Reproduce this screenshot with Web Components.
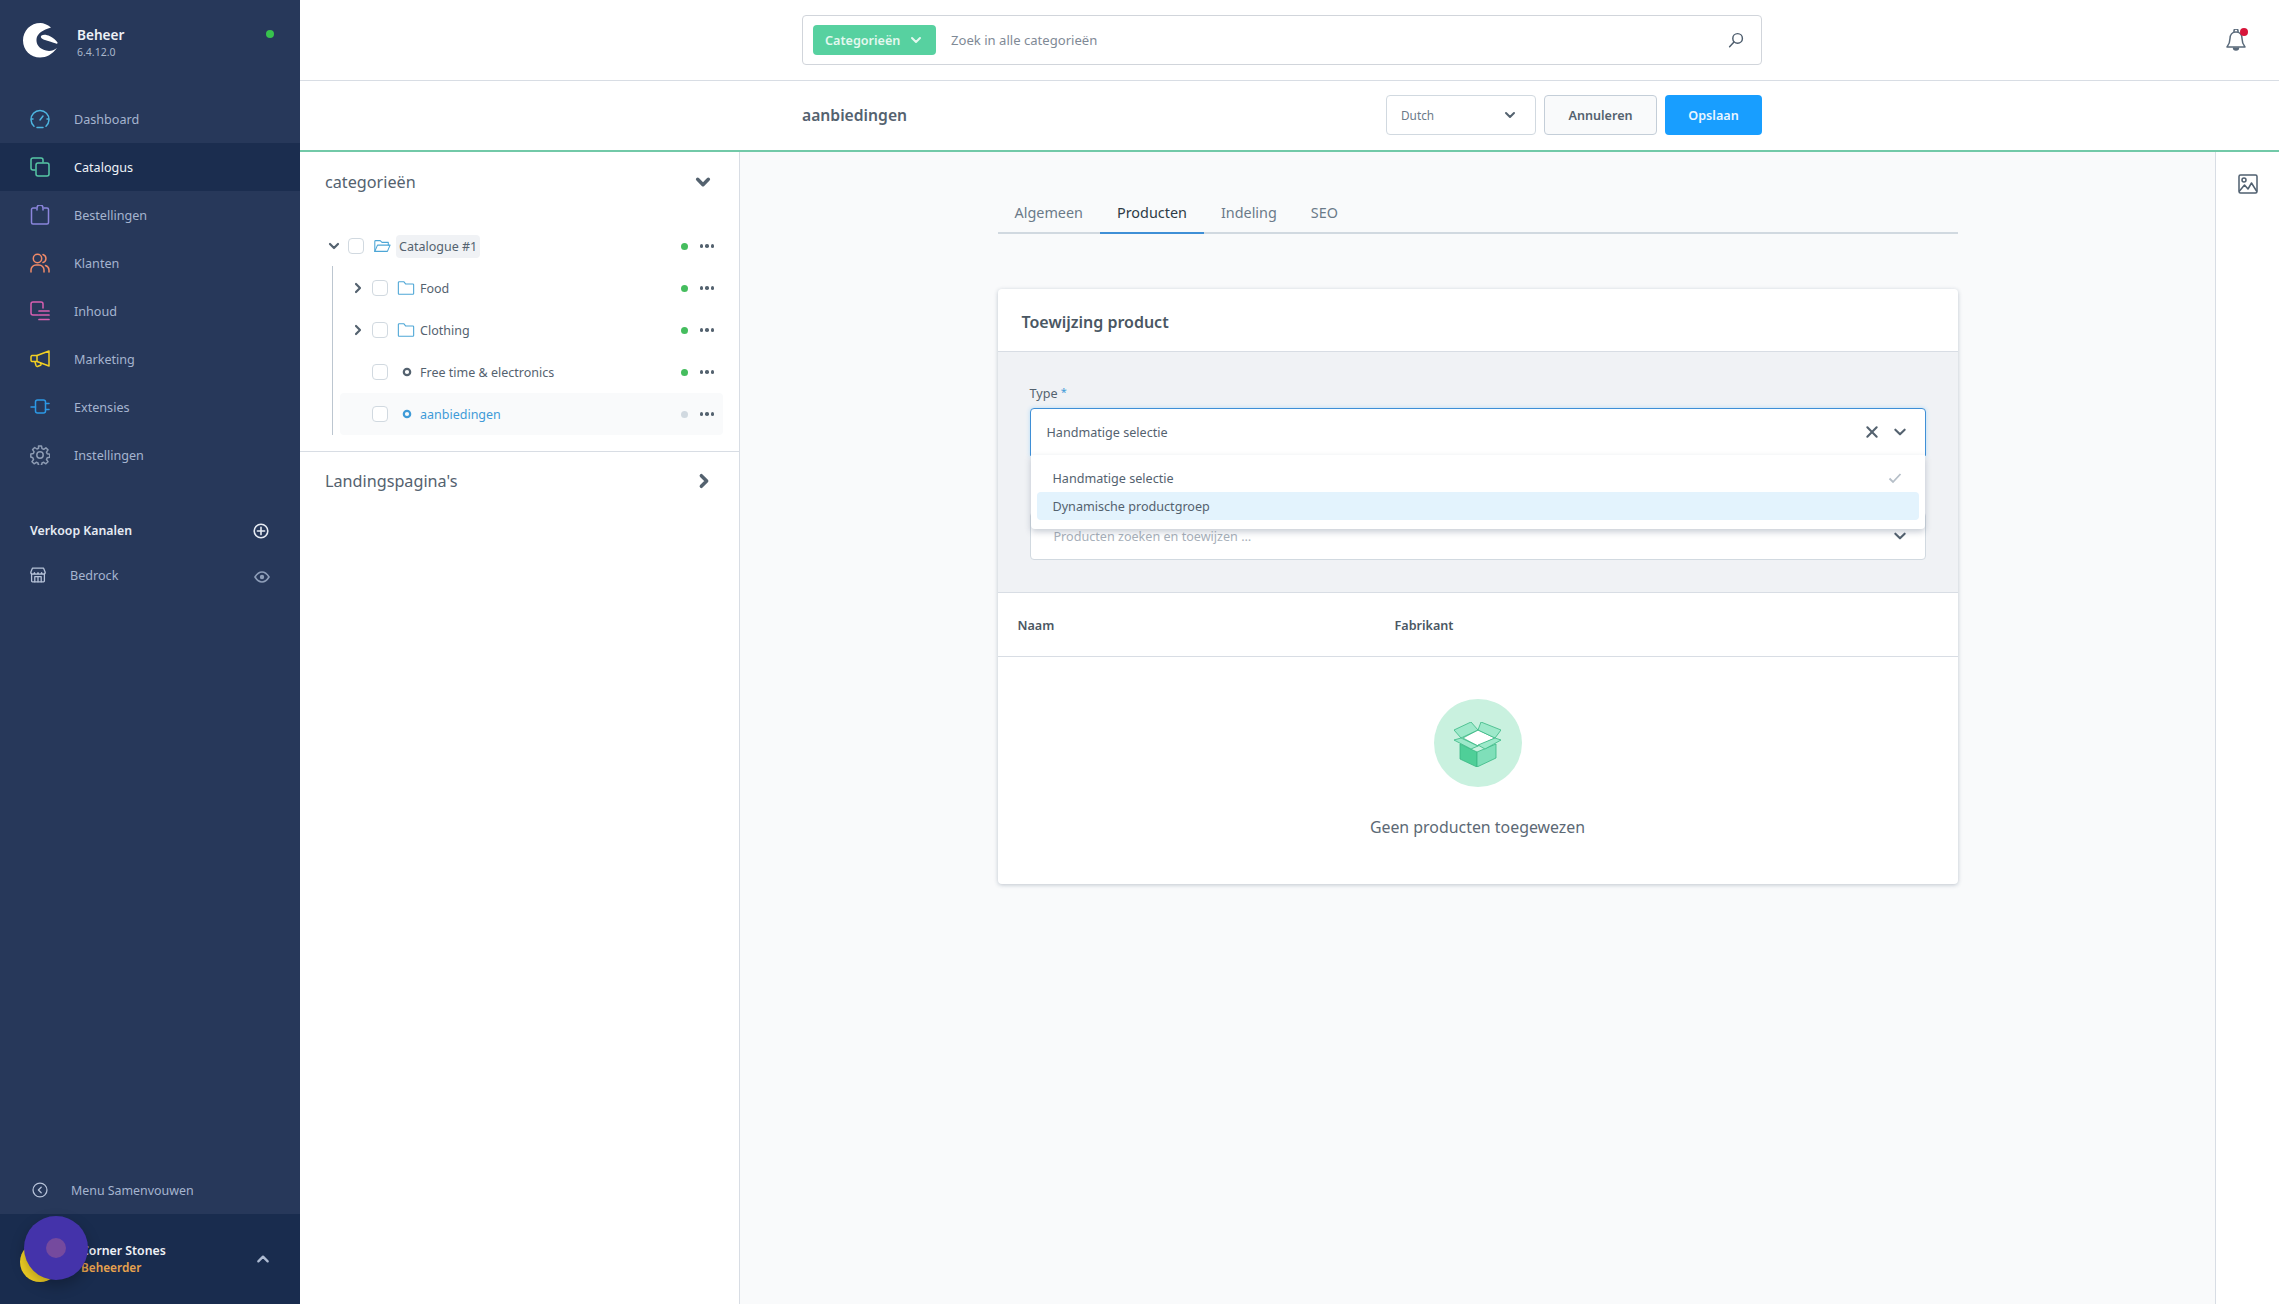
<!DOCTYPE html>
<html lang="nl">
<head>
<meta charset="utf-8">
<title>Beheer</title>
<style>
  html, body { margin: 0; height: 100%; }
  body { font-family: "Noto Sans", "Liberation Sans", sans-serif; color: #54626f; overflow: hidden; }
</style>
</head>
<body>
<sw-app></sw-app>
<script>
// Gedeelde iconen
const chev = (dir, size, color, width = 2) => {
  const rot = { down: 0, right: -90, up: 180, left: 90 }[dir];
  return `<svg width="${size}" height="${size}" viewBox="0 0 12 12" style="transform:rotate(${rot}deg);display:block"><path d="M2 4l4 4 4-4" fill="none" stroke="${color}" stroke-width="${width}" stroke-linecap="round" stroke-linejoin="round"/></svg>`;
};
const line = (size, color, body, sw = 1.5) =>
  `<svg width="${size}" height="${size}" viewBox="0 0 20 20" fill="none" stroke="${color}" stroke-width="${sw}" stroke-linecap="round" stroke-linejoin="round" style="display:block">${body}</svg>`;

const NAV_ICONS = {
  dashboard: line(20, '#4db5e0', '<path d="M4 17.2A9 9 0 1 1 16 17.2"/><path d="M7 18.5h6M10 11l3-4"/><path d="M1.5 10h1.5M17 10h1.5"/>'),
  catalogue: line(20, '#57c7a6', '<path d="M5 13H3a2 2 0 0 1-2-2V3a2 2 0 0 1 2-2h8a2 2 0 0 1 2 2v2"/><rect x="6" y="6" width="13" height="13" rx="2"/>'),
  orders: line(20, '#8b85dc', '<path d="M6 3H3a1.5 1.5 0 0 0-1.5 1.5v13A1.5 1.5 0 0 0 3 19h14a1.5 1.5 0 0 0 1.5-1.5v-13A1.5 1.5 0 0 0 17 3h-3"/><path d="M7 5V3a3 3 0 0 1 6 0v2"/>'),
  customers: line(20, '#f08a68', '<circle cx="7.5" cy="5.5" r="4.2"/><path d="M1 19v-2a5 5 0 0 1 5-5h3a5 5 0 0 1 5 5v2"/><path d="M13 1.5a4.2 4.2 0 0 1 0 8M15.5 12.5a5 5 0 0 1 3.5 4.5v2"/>'),
  content: line(20, '#d75fb0', '<path d="M8 14H3a2 2 0 0 1-2-2V3a2 2 0 0 1 2-2h8a2 2 0 0 1 2 2v4"/><path d="M9 10h10M9 14h10M9 18.5h10" stroke-width="1.7"/>'),
  marketing: line(20, '#f2d024', '<path d="M19 2L7 6.5H2a1.5 1.5 0 0 0-1 1.2v3.6a1.5 1.5 0 0 0 1 1.2h5l12 4.5z"/><path d="M7 6.5v6M5 13l1 3.5a1.5 1.5 0 0 0 2 .8l2.5-1a1 1 0 0 0 .5-1.3l-.4-.8"/>'),
  extensions: line(20, '#2c99e6', '<rect x="5.5" y="3" width="10" height="13" rx="2"/><path d="M1 10h4.500M15.500 6.500H19M15.500 12.500H19"/>'),
  settings: line(20, '#8d9bb3', '<circle cx="10" cy="10" r="3.200"/><path d="M8.500 1h3l.5 2.600 1.700.7 2.200-1.500 2.100 2.100-1.500 2.200.7 1.700 2.600.5v3l-2.600.5-.7 1.700 1.500 2.200-2.100 2.100-2.200-1.500-1.700.7-.5 2.600h-3l-.5-2.600-1.700-.7-2.200 1.500-2.100-2.100 1.500-2.200-.7-1.700L.800 12V9l2.600-.5.7-1.700-1.500-2.200 2.100-2.100 2.200 1.500 1.700-.7z"/>'),
};

class SwNavItem extends HTMLElement {
  connectedCallback() {
    const active = this.hasAttribute('active');
    this.attachShadow({ mode: 'open' }).innerHTML = `
      <style>
        :host { display: flex; align-items: center; height: 48px; padding-left: 30px; background: ${active ? '#1b2d4f' : 'transparent'}; }
        span { margin-left: 24px; font-size: 12.6px; color: ${active ? '#f0f3f8' : '#a5b4cf'}; }
      </style>
      ${NAV_ICONS[this.getAttribute('icon')]}<span><slot></slot></span>`;
  }
}
customElements.define('sw-nav-item', SwNavItem);

class SwSidebar extends HTMLElement {
  constructor() {
    super();
    this.attachShadow({ mode: 'open' }).innerHTML = `
      <style>
        :host { display: flex; flex-direction: column; width: 300px; flex: none; background: #27385a; color: #a5b4cf; }
        .head { display: flex; align-items: center; height: 80px; padding: 0 26px 0 23px; box-sizing: border-box; position: relative; }
        .brand { margin-left: 19px; flex: 1; margin-top: 6px; }
        .brand b { display: block; font-size: 13.6px; font-weight: 600; color: #eef1f6; line-height: 18px; }
        .brand small { display: block; font-size: 10.5px; color: #a9b6ca; line-height: 16px; }
        .dot { width: 8px; height: 8px; border-radius: 50%; background: #37c24d; margin-top: -12px; }
        nav { margin-top: 15px; }
        .sect { display: flex; align-items: center; justify-content: space-between; margin-top: 43px; padding: 0 31px 0 30px; font-size: 12.300px; font-weight: 600; color: #e6ebf3; }
        .chan { display: flex; align-items: center; margin-top: 14px; padding: 0 30px; height: 44px; font-size: 12.6px; }
        .chan span { flex: 1; margin-left: 24px; }
        .spacer { flex: 1; }
        .collapse { display: flex; align-items: center; height: 48px; padding-left: 32px; font-size: 12.4px; }
        .collapse span { margin-left: 23px; }
        .foot { display: flex; align-items: center; height: 90px; background: #192c4e; padding: 0 30px 0 20px; box-sizing: border-box; }
        .avatar { width: 40px; height: 40px; border-radius: 50%; background: #f2d024; margin: 6px 0 0; flex: none; }
        .user { flex: 1; margin-left: 21px; margin-top: 0; }
        .user b { display: block; font-size: 12.3px; font-weight: 600; color: #eef1f6; line-height: 17px; }
        .user i { display: block; font-style: normal; font-size: 11.8px; font-weight: 600; color: #e8a34d; line-height: 17px; }
      </style>
      <div class="head">
        <svg width="35" height="35" viewBox="0 0 35 35">
          <path fill="#fff" d="M28 4.500C24.500 1.500 20.500 0 17.500 0 7.500 0 0 7.800 0 17.500 0 27.300 7.700 34.500 17 34.500c6.500 0 12-3 17-9.500-3.500 2.500-7 3.500-11 2.500-6.500-1.500-10-6-9.500-11.500C14.200 10.500 20 6.800 28 4.500z"/>
          <path fill="#fff" d="M18.500 12.500c2-1.300 5-1 8.500.700 3 1.500 6 3.800 7.500 6.300.5 1-.5 1.500-1.500 1-4.500-1.700-8-2.500-11-3.500-2.500-.9-5.500-2.500-3.500-4.500z"/>
        </svg>
        <div class="brand"><b>Beheer</b><small>6.4.12.0</small></div>
        <div class="dot"></div>
      </div>
      <nav><slot></slot></nav>
      <div class="sect"><span>Verkoop Kanalen</span>${line(16, '#e6ebf3', '<circle cx="10" cy="10" r="8.500"/><path d="M10 5.500v9M5.500 10h9"/>', 2)}</div>
      <div class="chan">
        ${line(16, '#b6c2d8', '<path d="M2 8v9.500a1 1 0 0 0 1 1h14a1 1 0 0 0 1-1V8"/><path d="M1 6.500L3 1.500h14l2 5c0 1.500-1 2.500-2.300 2.500S14.500 8 14.500 7c0 1-1 2-2.200 2S10 8 10 7c0 1-1 2-2.300 2S5.500 8 5.500 7c0 1-1 2-2.200 2S1 8 1 6.500z"/><path d="M6 18.500V12h8v6.500M10 12v6.500"/>', 1.6)}
        <span>Bedrock</span>
        <svg width="16" height="12" viewBox="0 0 16 12" style="margin-top:3px"><path d="M1 6c2-3.200 4.500-5 7-5s5 1.800 7 5c-2 3.200-4.500 5-7 5s-5-1.800-7-5z" fill="none" stroke="#8d9db8" stroke-width="1.600"/><circle cx="8" cy="6" r="2.200" fill="#8d9db8"/></svg>
      </div>
      <div class="spacer"></div>
      <div class="collapse">
        ${line(16, '#b6c2d8', '<circle cx="10" cy="10" r="8.700"/><path d="M11.500 6.500L8 10l3.500 3.500"/>', 1.600)}
        <span>Menu Samenvouwen</span>
      </div>
      <div class="foot">
        <div class="avatar"></div>
        <div class="user"><b>Corner Stones</b><i>Beheerder</i></div>
        ${chev('up', 14, '#aebbd2')}
      </div>`;
  }
}
customElements.define('sw-sidebar', SwSidebar);

class SwSearchBar extends HTMLElement {
  constructor() {
    super();
    this.attachShadow({ mode: 'open' }).innerHTML = `
      <style>
        :host { display: flex; align-items: center; height: 81px; box-sizing: border-box; border-bottom: 1px solid #d8dde4; background: #fff; padding: 0 32px 0 502px; flex: none; }
        .box { display: flex; align-items: center; width: 960px; height: 50px; box-sizing: border-box; border: 1px solid #d1d5db; border-radius: 4px; padding: 0 17px 0 10px; }
        .pill { display: flex; align-items: center; justify-content: space-between; width: 123px; height: 30px; box-sizing: border-box; padding: 0 14px 0 12px; border-radius: 4px; background: #57d1a0; color: #e4f8ef; font-size: 12.6px; font-weight: 600; }
        .ph { flex: 1; margin-left: 15px; font-size: 13.1px; color: #7f8a96; }
        .bell { margin-left: auto; position: relative; margin-top: 2px; }
        .bell i { position: absolute; top: -1px; right: -1px; width: 8px; height: 8px; border-radius: 50%; background: #d7153a; }
      </style>
      <div class="box">
        <div class="pill"><span>Categorieën</span>${chev('down', 12, '#e4f8ef')}</div>
        <div class="ph">Zoek in alle categorieën</div>
        ${line(16, '#4c5c6c', '<circle cx="12" cy="8" r="6"/><path d="M7.500 12.500L2 18.500"/>', 1.800)}
      </div>
      <div class="bell">
        <svg width="22" height="24" viewBox="0 0 22 24" fill="none" stroke="#5a6a7a" stroke-width="1.500" stroke-linejoin="round" style="display:block"><path d="M11 3c-4 0-6 3-6 6.500 0 4-1 6-3 8.500h18c-2-2.500-3-4.500-3-8.500C17 6 15 3 11 3zM9 3V2a2 2 0 0 1 4 0v1"/><path d="M8.500 18.500a2.500 2.500 0 0 0 5 0" fill="#5a6a7a"/></svg>
        <i></i>
      </div>`;
  }
}
customElements.define('sw-search-bar', SwSearchBar);

class SwSmartBar extends HTMLElement {
  constructor() {
    super();
    this.attachShadow({ mode: 'open' }).innerHTML = `
      <style>
        :host { display: flex; align-items: center; height: 71px; box-sizing: border-box; border-bottom: 2px solid #72c9a8; background: #fff; padding: 0 517px 1px 502px; flex: none; }
        h2 { flex: 1; margin: 0; font-size: 15.7px; font-weight: 600; color: #54626f; }
        .lang { display: flex; align-items: center; justify-content: space-between; width: 150px; height: 40px; box-sizing: border-box; border: 1px solid #d1d9e0; border-radius: 4px; padding: 0 19px 0 14px; font-size: 11.8px; color: #6b7a89; }
        .btn { display: flex; align-items: center; justify-content: center; height: 40px; box-sizing: border-box; border-radius: 4px; font-size: 12.6px; font-weight: 600; margin-left: 8px; }
        .cancel { width: 113px; border: 1px solid #c4ced8; background: #f9fafb; color: #54626f; }
        .save { width: 97px; background: #189eff; color: #eaf6ff; }
      </style>
      <h2>aanbiedingen</h2>
      <div class="lang"><span>Dutch</span>${chev('down', 12, '#54626f')}</div>
      <div class="btn cancel">Annuleren</div>
      <div class="btn save">Opslaan</div>`;
  }
}
customElements.define('sw-smart-bar', SwSmartBar);

// Rij in de categorieboom
class SwTreeRow extends HTMLElement {
  connectedCallback() {
    const kind = this.getAttribute('kind');
    const level = Number(this.getAttribute('level') || 0);
    const current = this.hasAttribute('current');
    const arrow = this.getAttribute('arrow');
    const folderOpen = line(18, '#4da6d6', '<path d="M2 16V5a1 1 0 0 1 1-1h5l2 2h7v3"/><path d="M2 16l3-7h14l-3 7z"/>', 1.200);
    const folder = line(18, '#4da6d6', '<path d="M1.500 4a1 1 0 0 1 1-1h5l2 2.500h8a1 1 0 0 1 1 1V16a1 1 0 0 1-1 1h-15a1 1 0 0 1-1-1z"/>', 1.200);
    const leaf = `<svg width="18" height="18" viewBox="0 0 18 18"><circle cx="10" cy="9" r="3.200" fill="none" stroke="${current ? '#3f9bd8' : '#54626f'}" stroke-width="2.200"/></svg>`;
    this.attachShadow({ mode: 'open' }).innerHTML = `
      <style>
        :host { display: flex; align-items: center; height: 42px; margin-left: ${level ? 16 : 0}px; padding-left: ${level ? 10 : 0}px; border-radius: 4px; background: ${current ? '#f9fafb' : 'transparent'}; margin-right: 16px; font-size: 12.5px; color: ${current ? '#3f9bd8' : '#54626f'}; }
        .arrow { width: 16px; display: flex; justify-content: center; margin-left: ${level ? 0 : 2}px; }
        .check { width: 16px; height: 16px; box-sizing: border-box; border: 1px solid #d1d9e0; border-radius: 4px; background: #fff; margin-left: 6px; }
        .icon { margin-left: 9px; height: 18px; }
        .label { margin-left: 5px; flex: 1; }
        .label span { ${kind === 'open' ? 'background:#f0f2f5;border-radius:4px;padding:3px;' : ''} }
        .status { width: 7px; height: 7px; border-radius: 50%; background: ${current ? '#d1d9e0' : '#45bd5e'}; }
        .more { display: flex; gap: 2px; margin: 0 9px 0 12px; }
        .more i { width: 3.500px; height: 3.500px; border-radius: 50%; background: #54626f; }
      </style>
      <div class="arrow">${arrow ? chev(arrow, 12, '#54626f', 2.200) : ''}</div>
      <div class="check"></div>
      <div class="icon">${kind === 'open' ? folderOpen : kind === 'folder' ? folder : leaf}</div>
      <div class="label"><span><slot></slot></span></div>
      <div class="status"></div>
      <div class="more"><i></i><i></i><i></i></div>`;
  }
}
customElements.define('sw-tree-row', SwTreeRow);

class SwTreePanel extends HTMLElement {
  constructor() {
    super();
    this.attachShadow({ mode: 'open' }).innerHTML = `
      <style>
        :host { display: flex; flex-direction: column; width: 440px; flex: none; box-sizing: border-box; border-right: 1px solid #d8dde4; background: #fff; }
        .title { display: flex; align-items: center; justify-content: space-between; height: 60px; padding: 0 28px 0 25px; font-size: 16.2px; color: #54626f; flex: none; }
        .tree { position: relative; padding: 13px 0 16px 24px; border-bottom: 1px solid #d8dde4; }
        .guide { position: absolute; left: 32px; top: 54px; bottom: 16px; width: 1px; background: #bcc6d0; }
        .land { height: 58px; padding-right: 27px; }
      </style>
      <div class="title"><span>categorieën</span>${chev('down', 16, '#54626f', 2.600)}</div>
      <div class="tree"><div class="guide"></div><slot></slot></div>
      <div class="title land"><span>Landingspagina's</span>${chev('right', 16, '#54626f', 2.600)}</div>`;
  }
}
customElements.define('sw-tree-panel', SwTreePanel);

class SwTabs extends HTMLElement {
  constructor() {
    super();
    this.attachShadow({ mode: 'open' }).innerHTML = `
      <style>
        :host { display: flex; height: 42px; box-sizing: border-box; border-bottom: 2px solid #d1d9e0; padding-left: 0; font-size: 14.4px; color: #6b7a89; }
        a { display: block; padding: 11px 17px 0; height: 40px; box-sizing: border-box; }
        a.on { color: #2d3a46; border-bottom: 2px solid #3f8fd6; height: 42px; }
      </style>
      <a>Algemeen</a><a class="on">Producten</a><a>Indeling</a><a>SEO</a>`;
  }
}
customElements.define('sw-tabs', SwTabs);

class SwProductCard extends HTMLElement {
  constructor() {
    super();
    this.attachShadow({ mode: 'open' }).innerHTML = `
      <style>
        :host { display: block; margin-top: 55px; background: #fff; border-radius: 4px; box-shadow: 0 1px 4px rgba(40, 60, 90, .28); }
        h3 { margin: 0; height: 63px; box-sizing: border-box; border-bottom: 1px solid #d8dde4; padding: 21px 0 0 24px; font-size: 16px; font-weight: 600; line-height: 24px; color: #4a5763; }
        .form { position: relative; background: #f0f2f5; padding: 28px 32px 32px; border-bottom: 1px solid #d8dde4; }
        label { display: block; height: 24px; font-size: 12.6px; line-height: 24px; margin-bottom: 4px; color: #54626f; }
        label i { color: #3f9bd8; font-style: normal; font-size: 11px; vertical-align: 2px; }
        .select { display: flex; align-items: center; height: 48px; box-sizing: border-box; border: 1px solid #d1d9e0; border-radius: 4px; background: #fff; padding: 0 18px 0 16px; font-size: 12.6px; }
        .select .val { flex: 1; }
        .focus { border-color: #3f8fd6; box-shadow: 0 0 4px #b5dcf8; border-bottom-left-radius: 0; border-bottom-right-radius: 0; }
        .focus svg:first-of-type { margin-right: 14px; }
        .second { margin-top: 56px; padding-left: 23px; }
        .ph { color: #a8b0ba; }
        .menu { position: absolute; left: 33px; right: 33px; top: 103px; height: 74px; box-sizing: border-box; background: #fff; border-radius: 0 0 4px 4px; padding: 4px 6px; box-shadow: 0 3px 6px rgba(40, 60, 90, .25); z-index: 2; font-size: 12.6px; }
        .opt { display: flex; align-items: center; justify-content: space-between; height: 28px; padding: 0 17px 0 16px; border-radius: 4px; margin-top: 5px; }
        .opt + .opt { margin-top: 0; background: #e3f3fd; }
        .cols { display: flex; height: 64px; box-sizing: border-box; align-items: center; border-bottom: 1px solid #d8dde4; padding: 2px 0 0 20px; font-size: 12.6px; font-weight: 600; color: #4a5763; }
        .cols span:first-child { width: 377px; }
        .empty { display: flex; flex-direction: column; align-items: center; height: 227px; box-sizing: border-box; padding-top: 42px; }
        .disc { display: flex; align-items: center; justify-content: center; width: 88px; height: 88px; border-radius: 50%; background: #c9f1df; }
        .empty p { margin: 28px 0 0; font-size: 15.9px; line-height: 24px; color: #5c6975; }
      </style>
      <h3>Toewijzing product</h3>
      <div class="form">
        <label>Type <i>*</i></label>
        <div class="select focus">
          <span class="val">Handmatige selectie</span>
          <svg width="14" height="14" viewBox="0 0 12 12"><path d="M2 2l8 8M10 2l-8 8" stroke="#54626f" stroke-width="1.800" stroke-linecap="round"/></svg>
          ${chev('down', 14, '#54626f', 1.800)}
        </div>
        <div class="select second">
          <span class="val ph">Producten zoeken en toewijzen …</span>
          ${chev('down', 14, '#54626f', 1.800)}
        </div>
        <div class="menu">
          <div class="opt"><span>Handmatige selectie</span>
            <svg width="14" height="12" viewBox="0 0 14 12"><path d="M1.500 6.500l3.500 3.500 7.500-8" fill="none" stroke="#b6bfc8" stroke-width="1.800"/></svg></div>
          <div class="opt">Dynamische productgroep</div>
        </div>
      </div>
      <div class="cols"><span>Naam</span><span>Fabrikant</span></div>
      <div class="empty">
        <div class="disc">
          <svg width="47" height="45" viewBox="0 0 47 45" stroke="#3ab884" stroke-width=".8" stroke-linejoin="round" style="margin-top:2px">
            <path fill="#fff" d="M24 8l17 8-17 8-15-8z"/>
            <path fill="#4fcf98" d="M6 22l17 8v15L6 37z"/>
            <path fill="#7fdfb9" d="M23 30l19-8v14l-19 9z"/>
            <path fill="#9de9ca" d="M0 8l17-8 7 8-17 8z"/>
            <path fill="#9de9ca" d="M27 0l20 8-6 8-17-8z"/>
            <path fill="#9de9ca" d="M0 18l7-2 17 8-7 3z"/>
            <path fill="#9de9ca" d="M24 23l17-7 6 2-16 9z"/>
          </svg>
        </div>
        <p>Geen producten toegewezen</p>
      </div>`;
  }
}
customElements.define('sw-product-card', SwProductCard);

class SwApp extends HTMLElement {
  constructor() {
    super();
    this.attachShadow({ mode: 'open' }).innerHTML = `
      <style>
        :host { display: flex; position: relative; width: 100%; height: 100vh; overflow: hidden; }
        .main { flex: 1; display: flex; flex-direction: column; min-width: 0; }
        .body { flex: 1; display: flex; min-height: 0; }
        .content { flex: 1; background: #f9fafb; padding-top: 40px; min-width: 0; }
        .wrap { width: 960px; margin: 0 auto; }
        .side { width: 64px; flex: none; box-sizing: border-box; border-left: 1px solid #d8dde4; background: #fff; display: flex; justify-content: center; padding-top: 22px; }
        .touch { position: absolute; left: 24px; top: 1216px; width: 64px; height: 64px; border-radius: 50%; background: #4433aa; box-shadow: 0 6px 14px rgba(0, 0, 0, .25); display: flex; align-items: center; justify-content: center; }
        .touch i { width: 20px; height: 20px; border-radius: 50%; background: #754a9e; }
      </style>
      <sw-sidebar>
        <sw-nav-item icon="dashboard">Dashboard</sw-nav-item>
        <sw-nav-item icon="catalogue" active>Catalogus</sw-nav-item>
        <sw-nav-item icon="orders">Bestellingen</sw-nav-item>
        <sw-nav-item icon="customers">Klanten</sw-nav-item>
        <sw-nav-item icon="content">Inhoud</sw-nav-item>
        <sw-nav-item icon="marketing">Marketing</sw-nav-item>
        <sw-nav-item icon="extensions">Extensies</sw-nav-item>
        <sw-nav-item icon="settings">Instellingen</sw-nav-item>
      </sw-sidebar>
      <div class="main">
        <sw-search-bar></sw-search-bar>
        <sw-smart-bar></sw-smart-bar>
        <div class="body">
          <sw-tree-panel>
            <sw-tree-row kind="open" arrow="down">Catalogue #1</sw-tree-row>
            <sw-tree-row kind="folder" level="1" arrow="right">Food</sw-tree-row>
            <sw-tree-row kind="folder" level="1" arrow="right">Clothing</sw-tree-row>
            <sw-tree-row kind="leaf" level="1">Free time &amp; electronics</sw-tree-row>
            <sw-tree-row kind="leaf" level="1" current>aanbiedingen</sw-tree-row>
          </sw-tree-panel>
          <div class="content">
            <div class="wrap">
              <sw-tabs></sw-tabs>
              <sw-product-card></sw-product-card>
            </div>
          </div>
          <div class="side">${line(20, '#4f5f6f', '<rect x="1" y="1" width="18" height="18" rx="1.500"/><circle cx="6" cy="6" r="2"/><path d="M1.500 17l5-6 3.500 4 3.500-6 5 8"/>', 1.500)}</div>
        </div>
      </div>
      <div class="touch"><i></i></div>`;
  }
}
customElements.define('sw-app', SwApp);
</script>
</body>
</html>
